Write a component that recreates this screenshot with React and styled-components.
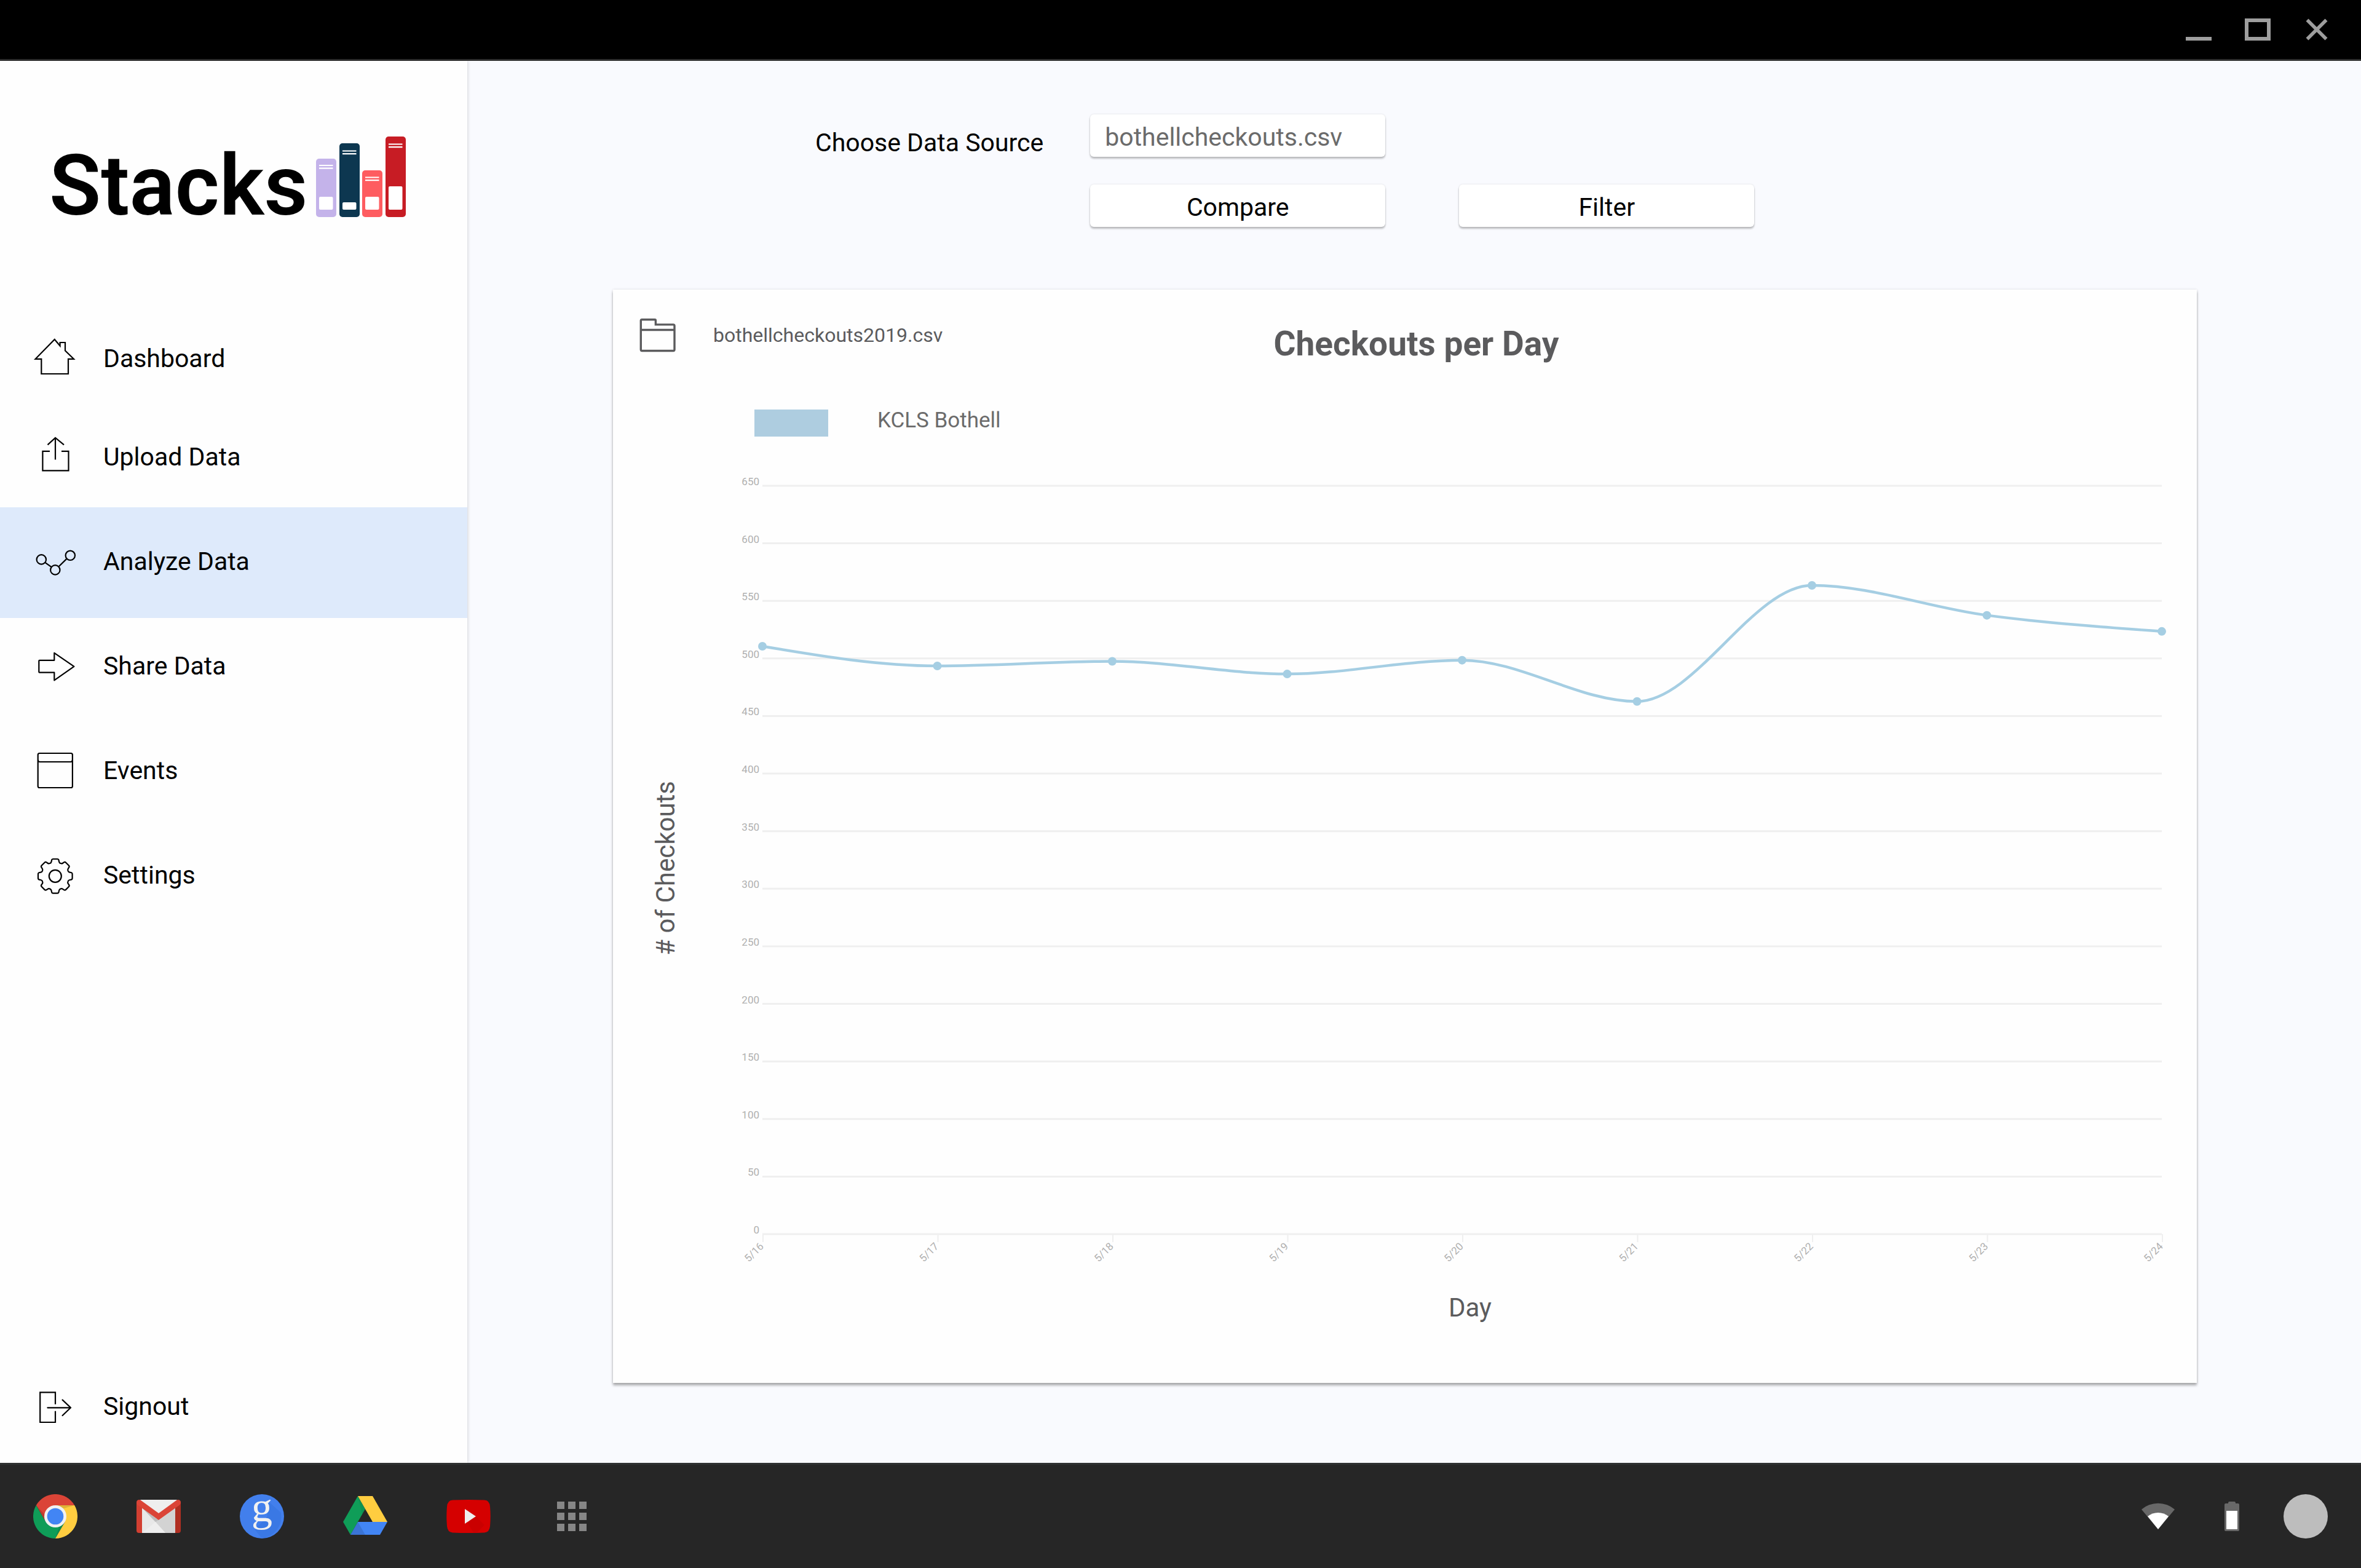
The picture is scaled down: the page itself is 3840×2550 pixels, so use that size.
import React from "react";
import styled, { createGlobalStyle } from "styled-components";

const GlobalStyle = createGlobalStyle`
  *, *::before, *::after { box-sizing: border-box; }
  body {
    margin: 0;
    background: #f9fafe;
    color: #000;
    font-family: Roboto, "Liberation Sans", sans-serif;
    font-size: 41px;
    line-height: 48px;
  }
  button, input { font: inherit; }
`;

/* ---------- shell ---------- */

const Screen = styled.div`
  display: flex;
  flex-direction: column;
  min-height: 100vh;
`;

const TitleBar = styled.header`
  display: flex;
  justify-content: flex-end;
  height: 99px;
  padding-right: 24px;
  background: #000;
  border-bottom: 3px solid #2f2f2f;
`;

const WindowButton = styled.button`
  display: flex;
  align-items: center;
  justify-content: center;
  width: 96px;
  height: 96px;
  padding: 0;
  border: 0;
  background: none;
  color: #9e9e9e;
`;

const Workspace = styled.div`
  display: flex;
  flex: 1;
`;

/* ---------- sidebar ---------- */

const Sidebar = styled.aside`
  display: flex;
  flex-direction: column;
  flex: 0 0 760px;
  background: #fefefe;
  box-shadow: 0 0 6px rgba(0, 0, 0, 0.2);
`;

const Logo = styled.a`
  display: flex;
  align-items: flex-start;
  gap: 14px;
  padding: 123px 0 0 80px;
  color: #000;
  font-size: 138px;
  font-weight: 600;
  line-height: 160px;
  text-decoration: none;
`;

const Nav = styled.nav`
  display: flex;
  flex-direction: column;
  flex: 1;
  margin-top: 123px;
`;

const NavLink = styled.a`
  display: flex;
  align-items: center;
  gap: 38px;
  height: ${(p) => (p.$tall ? 180 : 160)}px;
  margin-top: ${(p) => (p.$last ? "auto" : 0)};
  padding-left: 50px;
  background: ${(p) => (p.$active ? "#deeafb" : "transparent")};
  color: #000;
  text-decoration: none;
`;

const NavText = styled.span`
  padding-bottom: 4px;
`;

/* ---------- main ---------- */

const Main = styled.main`
  flex: 1;
  min-width: 0;
  padding: 87px 267px 130px 237px;
`;

const Controls = styled.form`
  display: flex;
  align-items: flex-start;
  gap: 76px;
  padding-left: 329px;
`;

const SourceLabel = styled.label`
  margin-top: 22px;
  white-space: nowrap;
`;

const ControlGrid = styled.div`
  display: grid;
  grid-template-columns: 480px 480px;
  gap: 45px 120px;
`;

const raised = `
  height: 69px;
  border: 0;
  border-radius: 6px;
  background: #fff;
  box-shadow: 0 3px 3px rgba(0, 0, 0, 0.24), 0 0 3px rgba(0, 0, 0, 0.12);
`;

const SourceInput = styled.input`
  ${raised}
  width: 100%;
  padding: 5px 24px 0;
  color: #6b6b6b;
`;

const ActionButton = styled.button`
  ${raised}
  grid-row: 2;
  padding: 5px 24px 0;
  color: #000;
`;

const Card = styled.section`
  margin-top: 102px;
  padding-bottom: 98px;
  background: #fefefe;
  box-shadow: 0 4px 4px rgba(0, 0, 0, 0.3), 0 0 4px rgba(0, 0, 0, 0.12);
  color: #5b5b5d;
`;

const CardHeader = styled.div`
  display: grid;
  grid-template-columns: 1fr auto 1fr;
  align-items: start;
  padding: 44px 6px 0 43px;
`;

const FileName = styled.div`
  display: flex;
  align-items: center;
  gap: 60px;
  font-size: 32px;
`;

const CardTitle = styled.h1`
  margin: 12px 0 0;
  font-size: 55px;
  font-weight: 700;
  line-height: 64px;
`;

const Legend = styled.div`
  display: flex;
  align-items: flex-start;
  gap: 80px;
  margin: 75px 0 60px 230px;
  color: #6b6b6b;
  font-size: 35px;
  line-height: 36px;
`;

const Swatch = styled.span`
  width: 120px;
  height: 44px;
  background: #aecde0;
`;

const Plot = styled.div`
  display: flex;
  align-items: center;
  gap: 90px;
  padding: 0 43px 0 62px;
`;

const YTitle = styled.div`
  width: 48px;
  padding-top: 6px;
  font-size: 42px;
  white-space: nowrap;
  writing-mode: vertical-rl;
  transform: rotate(180deg);
`;

const XTitle = styled.div`
  padding: 43px 43px 0 255px;
  font-size: 42px;
  text-align: center;
`;

const ChartSvg = styled.svg`
  display: block;
  flex: 1;
  min-width: 0;
  height: auto;
  font-size: 17px;
`;

/* ---------- shelf ---------- */

const Shelf = styled.footer`
  display: flex;
  align-items: center;
  justify-content: space-between;
  height: 171px;
  padding: 0 54px;
  background: #262626;
  border-top: 3px solid #2f3131;
  position: relative;
`;

const ShelfGroup = styled.div`
  display: flex;
  gap: ${(p) => p.$gap}px;
`;

const ShelfButton = styled.button`
  display: flex;
  padding: 0;
  border: 0;
  background: none;
`;

const Avatar = styled.button`
  width: 72px;
  height: 72px;
  padding: 0;
  border: 0;
  border-radius: 50%;
  background: #bdbdbd;
`;

/* ---------- drawings ---------- */

const Icon = ({ size = 80, children, ...rest }) => (
  <svg width={size} height={size} viewBox={`0 0 ${size} ${size}`} fill="none" aria-hidden="true" {...rest}>
    {children}
  </svg>
);

const LineIcon = ({ children }) => (
  <Icon stroke="#000" strokeWidth="2.2" strokeLinecap="round" strokeLinejoin="round">
    {children}
  </Icon>
);

const gearPath = (() => {
  const cx = 39.8;
  const cy = 39.8;
  const corner = 2;
  const pts = [];
  for (let i = 0; i < 8; i++) {
    const a = (i * Math.PI) / 4;
    [[-6.6, 21.6], [-5.4, 27.8], [5.4, 27.8], [6.6, 21.6]].forEach(([t, r]) => {
      pts.push([cx + t * Math.cos(a) + r * Math.sin(a), cy + t * Math.sin(a) - r * Math.cos(a)]);
    });
  }
  const toward = (a, b) => {
    const len = Math.hypot(b[0] - a[0], b[1] - a[1]);
    const k = Math.min(corner, len / 2) / len;
    return [a[0] + (b[0] - a[0]) * k, a[1] + (b[1] - a[1]) * k];
  };
  const f = (p) => `${p[0].toFixed(2)} ${p[1].toFixed(2)}`;
  const n = pts.length;
  return (
    pts
      .map((p, i) => {
        const before = toward(p, pts[(i + n - 1) % n]);
        const after = toward(p, pts[(i + 1) % n]);
        return `${i ? "L" : "M"}${f(before)}Q${f(p)} ${f(after)}`;
      })
      .join("") + "Z"
  );
})();

const navIcons = {
  home: <path d="M38.8 7L47.6 17.5V12H56V25.4L70 38.8H61V63H17.3V38.8H7.6Z" strokeLinejoin="miter" />,
  upload: (
    <g strokeLinecap="butt" strokeLinejoin="miter">
      <path d="M40 7V42.5M27.5 18.4L40 7L54 18.4" />
      <path d="M31 28.9H19.4V60.4H61.5V28.9H50" />
    </g>
  ),
  analyze: (
    <>
      <circle cx="17.3" cy="34.9" r="7.7" />
      <circle cx="39.8" cy="51.9" r="7.7" />
      <circle cx="64.3" cy="28.3" r="7.7" />
      <path d="M23.4 39.8L33.6 47.2M45.4 46.5L58.6 33.6" />
    </>
  ),
  share: <path d="M14.3 28.8H38.3V16.8L70.4 38.8L38.3 61.3V48.7H14.3Q13.3 48.7 13.3 47.7V29.8Q13.3 28.8 14.3 28.8Z" />,
  events: (
    <>
      <rect x="11.7" y="10" width="56.2" height="56" rx="2.6" />
      <path d="M12 21.5Q12 24 14.5 24H65Q67.7 24 67.7 21.5" />
    </>
  ),
  settings: (
    <>
      <path d={gearPath} />
      <circle cx="39.8" cy="39.8" r="10" />
    </>
  ),
  signout: (
    <>
      <path d="M40 34.7V15.3H15.2V64H40V45.7" strokeLinecap="butt" strokeLinejoin="miter" />
      <path d="M27.4 40.3H65M51.6 27.6L65 40.3L51.6 53" />
    </>
  ),
};

const books = [
  { x: 0, top: 36, fill: "#c4b3ea", tag: 21, lines: 47 },
  { x: 38, top: 11, fill: "#0d3750", tag: 12, lines: 23.5 },
  { x: 75, top: 55, fill: "#fe5c60", tag: 21, lines: 66.5 },
  { x: 113, top: 0, fill: "#c71c24", tag: 38, lines: 12.5 },
];

const BooksMark = () => (
  <svg width="146" height="131" viewBox="0 0 146 131" aria-hidden="true">
    {books.map((b) => (
      <g key={b.x}>
        <rect x={b.x} y={b.top} width="33" height={131 - b.top} rx="5" fill={b.fill} />
        <rect x={b.x + 5} y={119 - b.tag} width="22.5" height={b.tag} rx="2" fill="#fff" />
        <path d={`M${b.x + 5} ${b.lines}h22.5m-22.5 4.6h22.5`} stroke="#fff" strokeWidth="2.2" />
      </g>
    ))}
  </svg>
);

const FolderIcon = () => (
  <Icon size={60} stroke="#5b5b5d" strokeWidth="3.4">
    <path d="M4 4.8H25Q26.4 4.8 26.4 6.2V12.9H55Q57 12.9 57 14.9V53.5Q57 55.5 55 55.5H4.2Q2.3 55.5 2.3 53.5V6.6Q2.3 4.8 4 4.8ZM2.3 21.5H57" />
  </Icon>
);

const ChromeIcon = () => (
  <Icon size={72}>
    <path d="M4.8 18A36 36 0 0 1 67.2 18H36L20.4 45Z" fill="#db4437" />
    <path d="M4.8 18L20.4 45H51.6L36 72A36 36 0 0 1 4.8 18Z" fill="#0f9d58" />
    <path d="M67.2 18A36 36 0 0 1 36 72L51.6 45L36 18Z" fill="#ffcd40" />
    <path d="M67.2 18H36L50 23Z" fill="#000" fillOpacity=".13" />
    <path d="M4.8 18L20 45L18.5 33Z" fill="#000" fillOpacity=".13" />
    <path d="M36 72L51.6 45L42 53Z" fill="#000" fillOpacity=".1" />
    <circle cx="36" cy="36" r="18" fill="#f1f1f1" />
    <circle cx="36" cy="36" r="13.3" fill="#4285f4" />
  </Icon>
);

const GmailIcon = () => (
  <Icon size={72}>
    <rect x="7" y="9" width="58" height="54" fill="#e8e8e8" />
    <path d="M9 22L47 63H63V22L36 42Z" fill="#000" fillOpacity=".09" />
    <path d="M9 63L31 45L47 63Z" fill="#eee" />
    <path d="M9 22L31 45L36 42Z" fill="#000" fillOpacity=".1" />
    <path d="M5.5 9H66.5L36 31Z" fill="#eee" />
    <path d="M0 14H9V63H4Q0 63 0 59Z" fill="#d23f31" />
    <path d="M63 14H72V59Q72 63 68 63H63Z" fill="#b02f22" />
    <path d="M0 13.5Q0 9 4.5 9Q6 9 7.5 10.2L36 31L64.5 10.2Q66 9 67.5 9Q72 9 72 13.5Q72 16 69.5 18L36 42L2.5 18Q0 16 0 13.5Z" fill="#db4437" />
  </Icon>
);

const GoogleIcon = () => (
  <Icon size={72} overflow="visible">
    <circle cx="36" cy="36" r="36" fill="#427fec" />
    <path d="M48 13L67 30A36 36 0 0 1 36 72L24 57L44 38Z" fill="#3572de" fillOpacity=".55" />
    <text x="36" y="44" textAnchor="middle" fontFamily='"Liberation Serif", serif' fontSize="68" fill="#f1f1f1">
      g
    </text>
  </Icon>
);

const DriveIcon = () => (
  <Icon size={72}>
    <path d="M24 3L0 45L12 66L36 24Z" fill="#0f9d58" />
    <path d="M24 3H48L72 45H48Z" fill="#ffcd40" />
    <path d="M24 45H72L60 66H12Z" fill="#4285f4" />
    <path d="M24 45L36 66H12Z" fill="#000" fillOpacity=".12" />
    <path d="M24 3L31 33L36 24Z" fill="#000" fillOpacity=".06" />
  </Icon>
);

const YouTubeIcon = () => (
  <Icon size={72}>
    <path d="M10 9.6Q36 8.4 62 9.6Q70 10 71 20Q72.4 36 71 52Q70 62 62 62.4Q36 63.6 10 62.4Q2 62 1 52Q-.4 36 1 20Q2 10 10 9.6Z" fill="#d50000" />
    <path d="M48 36L62 50L50 62.5H44L34 46Z" fill="#000" fillOpacity=".05" />
    <path d="M30 24L48 36L30 48Z" fill="#eee" />
  </Icon>
);

const AppsIcon = () => (
  <Icon size={72} fill="#868686">
    {[12, 30, 48].map((y) => [12, 30, 48].map((x) => <rect key={`${x}-${y}`} x={x} y={y} width="12" height="12" />))}
  </Icon>
);

const WifiIcon = () => (
  <Icon size={72}>
    <path d="M36 57L9 24.7A41.5 41.5 0 0 1 63 24.7Z" fill="#686868" />
    <path d="M36 57L19 36A27 27 0 0 1 53 36Z" fill="#fff" />
  </Icon>
);

const BatteryIcon = () => (
  <Icon size={72}>
    <path d="M30 15V14Q30 12 32 12H40Q42 12 42 14V15H46Q48 15 48 17V58Q48 60 46 60H26Q24 60 24 58V17Q24 15 26 15Z" fill="#686868" />
    <rect x="27" y="27" width="18" height="30" fill="#fff" />
  </Icon>
);

/* ---------- chart ---------- */

const series = [
  { day: "5/16", value: 510.6 },
  { day: "5/17", value: 493.5 },
  { day: "5/18", value: 497.5 },
  { day: "5/19", value: 486.5 },
  { day: "5/20", value: 498.5 },
  { day: "5/21", value: 462.7 },
  { day: "5/22", value: 563.5 },
  { day: "5/23", value: 537.5 },
  { day: "5/24", value: 523.5 },
];

const MAX = 650;
const STEP = 50;
const area = { left: 43, right: 2319, top: 20, bottom: 1237 };

const xAt = (i) => area.left + ((area.right - area.left) * i) / (series.length - 1);
const yAt = (v) => area.bottom - ((area.bottom - area.top) * v) / MAX;

/* Monotone cubic interpolation: the curve never overshoots its points. */
const smoothPath = (pts) => {
  const n = pts.length;
  const slope = (i) => (pts[i + 1][1] - pts[i][1]) / (pts[i + 1][0] - pts[i][0]);
  const m = pts.map((_, i) => {
    if (i === 0 || i === n - 1) return null;
    const a = slope(i - 1);
    const b = slope(i);
    return (Math.sign(a) + Math.sign(b)) * Math.min(Math.abs(a), Math.abs(b), 0.5 * Math.abs((a + b) / 2));
  });
  m[0] = (3 * slope(0) - m[1]) / 2;
  m[n - 1] = (3 * slope(n - 2) - m[n - 2]) / 2;
  return pts.slice(1).reduce((d, [x, y], i) => {
    const [px, py] = pts[i];
    const h = (x - px) / 3;
    return `${d}C${px + h} ${py + m[i] * h} ${x - h} ${y - m[i + 1] * h} ${x} ${y}`;
  }, `M${pts[0][0]} ${pts[0][1]}`);
};

const CheckoutsChart = () => {
  const pts = series.map((s, i) => [xAt(i), yAt(s.value)]);
  const marks = Array.from({ length: MAX / STEP + 1 }, (_, i) => MAX - i * STEP);
  return (
    <ChartSvg viewBox="0 0 2333 1290" role="img" aria-label="Checkouts per day, KCLS Bothell">
      {marks.map((v) => (
        <g key={v}>
          <line x1={area.left} x2={area.right} y1={yAt(v)} y2={yAt(v)} stroke="#efefef" strokeWidth="3" />
          <text x="38" y={yAt(v) - 1} textAnchor="end" fill="#b0b0b0">
            {v}
          </text>
        </g>
      ))}
      {series.map((s, i) => (
        <g key={s.day} transform={`translate(${xAt(i) + 1} ${area.bottom})`}>
          <line y1="0" y2="13" stroke="#efefef" strokeWidth="2" />
          <text transform="translate(2 21) rotate(-45)" textAnchor="end" fill="#b0b0b0">
            {s.day}
          </text>
        </g>
      ))}
      <path d={smoothPath(pts)} fill="none" stroke="#a5cee3" strokeWidth="4.5" />
      {pts.map(([x, y]) => (
        <circle key={x} cx={x} cy={y} r="7" fill="#a5cee3" />
      ))}
    </ChartSvg>
  );
};

/* ---------- page ---------- */

const navItems = [
  { icon: "home", text: "Dashboard" },
  { icon: "upload", text: "Upload Data" },
  { icon: "analyze", text: "Analyze Data", active: true, tall: true },
  { icon: "share", text: "Share Data" },
  { icon: "events", text: "Events", tall: true },
  { icon: "settings", text: "Settings" },
  { icon: "signout", text: "Signout", tall: true, last: true },
];

const shelfApps = [
  { name: "Chrome", Glyph: ChromeIcon },
  { name: "Gmail", Glyph: GmailIcon },
  { name: "Google", Glyph: GoogleIcon },
  { name: "Drive", Glyph: DriveIcon },
  { name: "YouTube", Glyph: YouTubeIcon },
  { name: "All apps", Glyph: AppsIcon },
];

export default function App() {
  return (
    <Screen>
      <GlobalStyle />
      <TitleBar>
        <WindowButton aria-label="Minimize">
          <Icon size={48}>
            <path d="M3 39H45" stroke="currentColor" strokeWidth="6" />
          </Icon>
        </WindowButton>
        <WindowButton aria-label="Maximize">
          <Icon size={48}>
            <rect x="6" y="9" width="36" height="30" stroke="currentColor" strokeWidth="6" />
          </Icon>
        </WindowButton>
        <WindowButton aria-label="Close">
          <Icon size={48}>
            <path d="M8.5 8.5L39.5 39.5M39.5 8.5L8.5 39.5" stroke="currentColor" strokeWidth="5.6" />
          </Icon>
        </WindowButton>
      </TitleBar>

      <Workspace>
        <Sidebar>
          <Logo href="#home">
            Stacks
            <BooksMark />
          </Logo>
          <Nav aria-label="Main">
            {navItems.map((item) => (
              <NavLink
                key={item.icon}
                href={`#${item.icon}`}
                $active={item.active}
                $tall={item.tall}
                $last={item.last}
                aria-current={item.active ? "page" : undefined}
              >
                <LineIcon>{navIcons[item.icon]}</LineIcon>
                <NavText>{item.text}</NavText>
              </NavLink>
            ))}
          </Nav>
        </Sidebar>

        <Main>
          <Controls onSubmit={(e) => e.preventDefault()}>
            <SourceLabel htmlFor="source">Choose Data Source</SourceLabel>
            <ControlGrid>
              <SourceInput id="source" type="text" defaultValue="bothellcheckouts.csv" />
              <ActionButton type="button">Compare</ActionButton>
              <ActionButton type="button">Filter</ActionButton>
            </ControlGrid>
          </Controls>

          <Card>
            <CardHeader>
              <FileName>
                <FolderIcon />
                bothellcheckouts2019.csv
              </FileName>
              <CardTitle>Checkouts per Day</CardTitle>
            </CardHeader>
            <Legend>
              <Swatch />
              KCLS Bothell
            </Legend>
            <Plot>
              <YTitle># of Checkouts</YTitle>
              <CheckoutsChart />
            </Plot>
            <XTitle>Day</XTitle>
          </Card>
        </Main>
      </Workspace>

      <Shelf>
        <ShelfGroup $gap={96}>
          {shelfApps.map(({ name, Glyph }) => (
            <ShelfButton key={name} aria-label={name}>
              <Glyph />
            </ShelfButton>
          ))}
        </ShelfGroup>
        <ShelfGroup $gap={48}>
          <WifiIcon />
          <BatteryIcon />
          <Avatar aria-label="Account" />
        </ShelfGroup>
      </Shelf>
    </Screen>
  );
}
